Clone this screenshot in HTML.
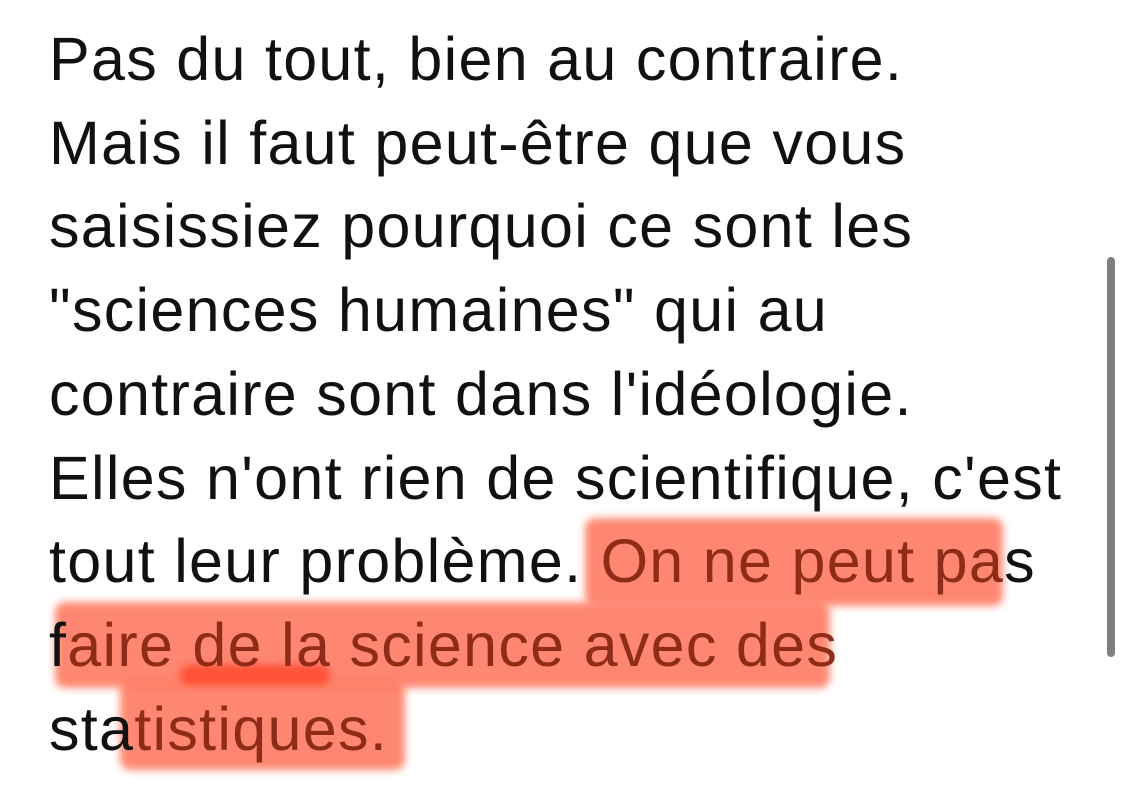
<!DOCTYPE html>
<html><head><meta charset="utf-8"><style>
html,body{margin:0;padding:0;background:#fff;width:1125px;height:806px;overflow:hidden;position:relative}
.hl{position:absolute;background:#ff7a62;filter:blur(4px);border-radius:10px;opacity:.9}
.t{position:absolute;left:49px;top:18px;font-family:"Liberation Sans",sans-serif;font-size:61px;line-height:83.7px;color:#111;white-space:pre;letter-spacing:1.3px}
.r{color:#8e2c18}
.sb{position:absolute;left:1107px;top:257px;width:8px;height:400px;background:#7f7f7f;border-radius:4px}
</style></head><body>
<div class="hl" style="left:585px;top:518px;width:418px;height:88px"></div>
<div class="hl" style="left:55px;top:602px;width:775px;height:86px"></div>
<div class="hl" style="left:120px;top:680px;width:285px;height:90px"></div>
<div class="hl" style="left:180px;top:665px;width:150px;height:20px;background:#ff4a30"></div>
<div class="t">Pas du tout, bien au contraire.
Mais il faut peut-être que vous
saisissiez pourquoi ce sont les
"sciences humaines" qui au
contraire sont dans l'idéologie.
Elles n'ont rien de scientifique, c'est
tout leur problème. <span class="r">On ne peut pa</span>s
f<span class="r">aire de la science avec des</span>
sta<span class="r">tistiques.</span></div>
<div class="sb"></div>
</body></html>
